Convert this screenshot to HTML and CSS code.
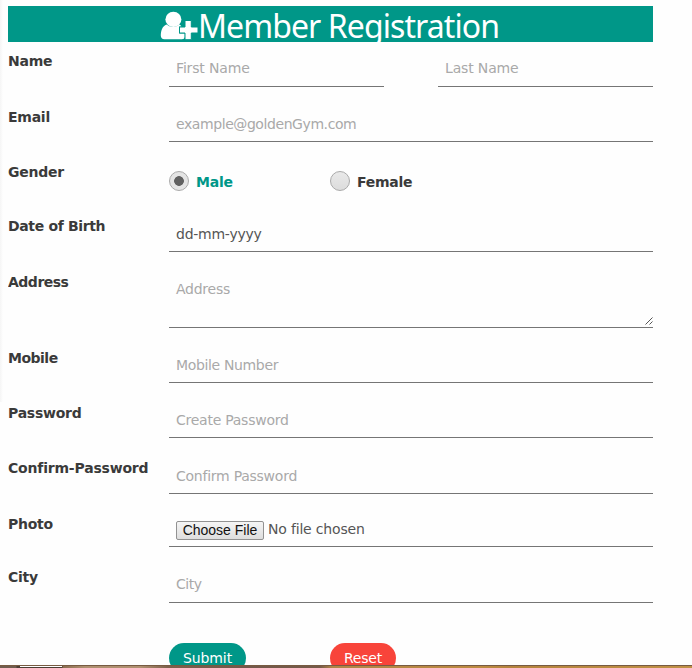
FILE: index.html
```html
<!DOCTYPE html>
<html lang="en">
<head>
<meta charset="utf-8">
<title>Member Registration</title>
<link rel="stylesheet" href="styles.css">
</head>
<body>
<div class="page">
<header class="banner">
  <svg class="member-icon" viewBox="0 0 38 30" width="38" height="30">
    <path fill="#fff" d="M6.500 13.500C2.500 15 0.800 19.500 0.800 24.500Q0.800 28.200 4.500 28.200H22Q24.500 28.200 24.800 26V22.500H19V15.500H21.500Q20.500 14 19.500 13.500A9 8 0 0 1 6.500 13.500Z"/>
    <ellipse cx="13.400" cy="8.400" rx="8" ry="7.600" fill="#fff"/>
    <path fill="#fff" stroke="#009788" stroke-width="1" d="M25 9.500H31.300V16H38V22H31.300V28.700H25V22H19.500V16H25Z"/>
  </svg>
  <h1 class="title">Member Registration</h1>
</header>
<form class="form">
  <div class="row r-name"><label class="label">Name</label><div class="fields split"><input class="field" placeholder="First Name"><input class="field" placeholder="Last Name"></div></div>
  <div class="row r-email"><label class="label">Email</label><input class="field" placeholder="example@goldenGym.com"></div>
  <div class="row r-gender"><span class="label">Gender</span><div class="choices">
    <span class="choice selected"><i class="radio"></i>Male</span><span class="choice"><i class="radio"></i>Female</span>
  </div></div>
  <div class="row r-dob"><label class="label">Date of Birth</label><div class="field value date">dd-mm-yyyy</div></div>
  <div class="row r-address"><label class="label">Address</label><div class="field area"><span>Address</span><svg class="grip" viewBox="0 0 8 8" width="8" height="8"><path d="M0.500 7.500L7.500 0.500M4.500 7.500L7.500 4.500" stroke="#555" fill="none"/></svg></div></div>
  <div class="row r-mobile"><label class="label">Mobile</label><input class="field" placeholder="Mobile Number"></div>
  <div class="row r-password"><label class="label">Password</label><input class="field" placeholder="Create Password"></div>
  <div class="row r-confirm"><label class="label">Confirm-Password</label><input class="field" placeholder="Confirm Password"></div>
  <div class="row r-photo"><label class="label">Photo</label><div class="field value file"><button type="button" class="choose">Choose File</button><span>No file chosen</span></div></div>
  <div class="row r-city"><label class="label">City</label><input class="field" placeholder="City"></div>
  <div class="actions"><button type="button" class="btn submit">Submit</button><button type="button" class="btn reset">Reset</button></div>
</form>
<div class="strip"></div>
</div>
</body>
</html>
```
FILE: styles.css
```css
* { box-sizing: border-box; }
body { margin: 0; background: #fefefe; color: #3a3a3a; font-family: "DejaVu Sans", Verdana, sans-serif; font-size: 14px; overflow: hidden; }
.page { height: 668px; padding-top: 6px; display: flex; flex-direction: column; overflow: hidden; background: linear-gradient(90deg, #f5f5f5, #fefefe) 0 0 / 3px 402px no-repeat; }
.banner { flex: none; width: 645px; height: 36px; margin-left: 8px; padding-left: 152px; background: #009788; color: #fff; display: flex; overflow: hidden; }
.member-icon { margin-top: 5px; flex: none; }
.title { margin: 0; font: 400 32px/39px "Noto Sans", "Open Sans", sans-serif; white-space: nowrap; letter-spacing: -0.92px; }
.form { flex: none; width: 645px; height: 623px; margin-left: 8px; padding-top: 8px; overflow: hidden; }
.row { display: grid; grid-template-columns: 161px 484px; align-items: start; height: 55px; }
.r-name, .r-dob, .r-confirm { height: 56px; }
.r-gender { height: 54px; }
.r-address { height: 76px; }
.r-photo { height: 53px; }
.r-city { height: 77px; }
.label { font-weight: 700; font-size: 14px; line-height: 22px; letter-spacing: -0.25px; white-space: nowrap; }
.r-confirm .label { letter-spacing: -0.2px; }
.r-dob .label { letter-spacing: -0.35px; }
.r-address .label, .r-mobile .label { letter-spacing: -0.5px; }
.split { display: flex; justify-content: space-between; }
.field { display: block; width: 100%; height: 36px; margin: 0; padding: 1px 7px 0; border: 0; border-bottom: 1px solid #757575; border-radius: 0; outline: 0; background: transparent; color: #a9a9a9; font: 14px "DejaVu Sans", Verdana, sans-serif; letter-spacing: -0.25px; }
.field::placeholder { color: #a9a9a9; opacity: 1; }
.split .field { width: 215px; }
.r-name .field, .r-dob .field, .r-confirm .field, .r-city .field { height: 37px; }
.r-name .field, .r-city .field { padding: 0 7px 1px; }
.r-name .field { letter-spacing: -0.15px; }
.r-email .field { letter-spacing: -0.42px; }
.r-mobile .field { letter-spacing: -0.35px; }
.r-city .field { letter-spacing: -0.5px; }
.value { color: #555; line-height: 36px; }
.field.area { height: 57px; line-height: 35px; display: flex; justify-content: space-between; padding-right: 0; }
.grip { align-self: flex-end; margin-bottom: 2px; }
.choices { display: flex; padding-top: 10px; }
.choice { width: 161px; display: flex; align-items: center; font-weight: 700; letter-spacing: -0.25px; line-height: 22px; }
.selected { color: #009788; }
.radio { width: 20px; height: 20px; margin: -2px 7px 0 0; border: 1px solid #aaa; border-radius: 50%; background: linear-gradient(#e9e9e9, #dcdcdc); }
.selected .radio { background: radial-gradient(circle, #606060 0 4.500px, #e4e4e4 5.200px); }
.field.file { height: 34px; display: flex; align-items: flex-start; line-height: 33px; padding-top: 0; letter-spacing: -0.18px; }
.choose { width: 88px; height: 19px; margin: 8px 4px 0 0; padding: 0; border: 1px solid #929292; border-radius: 2px; background: linear-gradient(#f5f5f5, #dedede); font: 14px/17px "Liberation Sans", Arial, sans-serif; color: #111; white-space: nowrap; }
.actions { display: flex; gap: 84px; padding-left: 161px; }
.btn { height: 30px; padding: 0; border: 0; border-radius: 15px; color: #fff; font: 14px/30px "DejaVu Sans", Verdana, sans-serif; }
.submit { width: 77px; background: #009788; letter-spacing: -0.1px; }
.reset { width: 66px; background: #f8443a; letter-spacing: -0.2px; }
.strip { flex: none; height: 3px; background: linear-gradient(#fff, #fff) 20px 0 / 42px 1px no-repeat, linear-gradient(90deg, #705c4e 0 16px, #4b3d33 17px 20px, #4b3d33 20px 62px, #8a6c50 63px, #af9070 85px, #b09070 140px, #7d604b 168px, #73584a 245px, #755a48 320px, #b18446 332px, #bd8a40 480px, #b5833c 510px, #c09045 692px); border-top: 1px solid #775b42; }
```
